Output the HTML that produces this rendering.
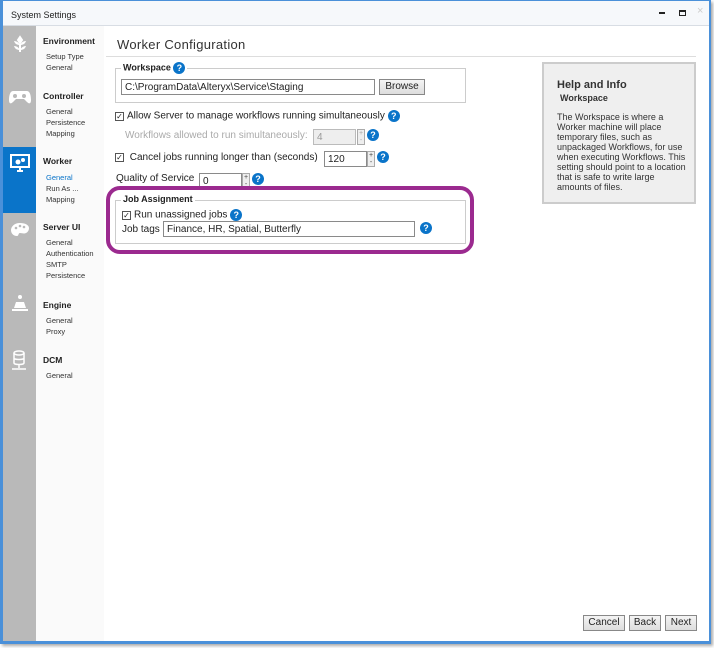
<!DOCTYPE html>
<html><head><style>
*{margin:0;padding:0;box-sizing:border-box}
body{width:714px;height:648px;background:#fff;font-family:"Liberation Sans",Arial,sans-serif;position:relative;overflow:hidden;font-size:12px;color:#222}
.win{position:absolute;left:0;top:0;width:711px;height:644px;background:#fff;box-shadow:2px 2px 3px #aaa}
.frame{position:absolute;left:0;top:0;width:711px;height:644px;border:3px solid #4a90d9;border-top:1px solid #4a90d9;border-right-width:2px;z-index:5}
.title{position:absolute;left:0;top:0;width:100%;height:26px;background:#f6f8fb;border-bottom:1px solid #d8dde4;font-size:9px;padding:10px 0 0 11px;color:#222}
.ab{position:absolute}
.icons{position:absolute;left:3px;top:26px;width:33px;height:618px;background:#b9b9b9}
.sel{position:absolute;left:3px;top:147px;width:33px;height:66px;background:#0a74c9}
.nav{position:absolute;left:36px;top:26px;width:68px;height:618px;background:#fafafa}
.nh{position:absolute;left:43px;font-weight:bold;font-size:8.5px;color:#222}
.ni{position:absolute;left:46px;font-size:7.5px;color:#333;line-height:11px}
h1{position:absolute;left:117px;top:37px;font-weight:normal;font-size:13px;color:#333;letter-spacing:.3px}
.hr{position:absolute;left:106px;top:56px;width:590px;height:1px;background:#ddd}
.q{display:inline-block;width:12px;height:12px;border-radius:50%;background:#0a74c9;color:#fff;font-size:9px;font-weight:bold;text-align:center;line-height:12px;vertical-align:middle}
.inp{position:absolute;border:1px solid #8a8a8a;background:#fff;font-size:10px;padding:1px 3px;height:16px;line-height:13px}
.cb{display:inline-block;width:9px;height:9px;border:1px solid #555;font-size:8px;line-height:8px;text-align:center;vertical-align:middle;margin-right:3px}
.t{position:absolute;font-size:10px;white-space:nowrap}
.spin{position:absolute;width:8px;height:16px;border:1px solid #aaa;background:#eee;font-size:7px;line-height:7px;text-align:center;color:#444}
.btn{position:absolute;border:1px solid #888;background:linear-gradient(#f4f4f4,#ddd);font-size:10px;text-align:center;height:16px;line-height:14px}
.fs{position:absolute;border:1px solid #ccc}
</style></head><body>
<div class="win">
<div class="title">System Settings
<span class="ab" style="left:659px;top:12px;width:6px;height:2px;background:#222"></span>
<span class="ab" style="left:679px;top:10px;width:7px;height:6px;border:1px solid #222;border-top-width:2px"></span>
<span class="ab" style="left:697px;top:5px;font-size:11px;color:#ccc">×</span>
</div>
<div class="icons"></div>
<div class="sel"></div>
<svg class="ab" style="left:10px;top:34px" width="20" height="20" viewBox="0 0 20 20" fill="#fff"><path d="M10 3l2 3-2 3-2-3zM10 10v8" stroke="#fff" stroke-width="2"/><path d="M4 7c3 0 5 2 6 4-3 0-5-1-6-4zM16 7c-3 0-5 2-6 4 3 0 5-1 6-4zM4 12c3 0 5 2 6 4-3 0-5-1-6-4zM16 12c-3 0-5 2-6 4 3 0 5-1 6-4z"/></svg>
<svg class="ab" style="left:9px;top:90px" width="22" height="14" viewBox="0 0 22 14"><path d="M4 1h14c3 0 4 5 4 9s-2 4-4 2l-3-3H7l-3 3c-2 2-4 2-4-2S1 1 4 1z" fill="#fff"/><circle cx="6" cy="6" r="2" fill="#b9b9b9"/><circle cx="15" cy="6" r="2" fill="#b9b9b9"/></svg>
<svg class="ab" style="left:10px;top:154px" width="20" height="18" viewBox="0 0 20 18"><rect x="1" y="1" width="18" height="12" fill="none" stroke="#fff" stroke-width="2"/><path d="M7 17h6M10 13v4" stroke="#fff" stroke-width="2"/><circle cx="8" cy="8" r="2.5" fill="#fff"/><circle cx="13" cy="6" r="2" fill="#fff"/></svg>
<svg class="ab" style="left:10px;top:222px" width="20" height="16" viewBox="0 0 20 16"><path d="M10 1C4 1 1 5 1 8s2 6 6 6c2 0 1-3 3-3s4 1 6 0 3-3 3-5C19 3 15 1 10 1z" fill="#fff"/><circle cx="6" cy="6" r="1.3" fill="#b9b9b9"/><circle cx="10" cy="4" r="1.3" fill="#b9b9b9"/><circle cx="14" cy="5" r="1.3" fill="#b9b9b9"/></svg>
<svg class="ab" style="left:11px;top:294px" width="18" height="20" viewBox="0 0 18 20" fill="#fff"><circle cx="9" cy="3" r="2"/><path d="M5 8h8l2 6H3z"/><rect x="1" y="15" width="16" height="2"/></svg>
<svg class="ab" style="left:11px;top:350px" width="16" height="22" viewBox="0 0 16 22"><ellipse cx="8" cy="3" rx="5" ry="2" fill="none" stroke="#fff" stroke-width="1.5"/><path d="M3 3v10c0 2 10 2 10 0V3M3 8c0 2 10 2 10 0M8 15v3M1 19h14" fill="none" stroke="#fff" stroke-width="1.5"/></svg>
<div class="nav"></div>
<div class="nh" style="top:36px">Environment</div>
<div class="ni" style="top:51px">Setup Type<br>General</div>
<div class="nh" style="top:91px">Controller</div>
<div class="ni" style="top:106px">General<br>Persistence<br>Mapping</div>
<div class="nh" style="top:156px">Worker</div>
<div class="ni" style="top:172px"><span style="color:#0a74c9">General</span><br>Run As ...<br>Mapping</div>
<div class="nh" style="top:222px">Server UI</div>
<div class="ni" style="top:237px">General<br>Authentication<br>SMTP<br>Persistence</div>
<div class="nh" style="top:300px">Engine</div>
<div class="ni" style="top:315px">General<br>Proxy</div>
<div class="nh" style="top:355px">DCM</div>
<div class="ni" style="top:370px">General</div>

<h1>Worker Configuration</h1>
<div class="hr"></div>

<div class="fs" style="left:115px;top:68px;width:351px;height:35px"></div>
<div class="t" style="left:121px;top:62px;background:#fff;padding:0 2px;font-weight:bold;font-size:9px">Workspace <span class="q">?</span></div>
<div class="inp" style="left:121px;top:79px;width:254px">C:\ProgramData\Alteryx\Service\Staging</div>
<div class="btn" style="left:379px;top:79px;width:46px">Browse</div>

<div class="t" style="left:115px;top:110px"><span class="cb">✓</span>Allow Server to manage workflows running simultaneously <span class="q">?</span></div>
<div class="t" style="left:125px;top:130px;color:#aaa">Workflows allowed to run simultaneously:</div>
<div class="inp" style="left:313px;top:129px;width:43px;background:#eee;border-color:#bbb;color:#999">4</div>
<div class="spin" style="left:357px;top:129px;color:#aaa">+<br>-</div>
<span class="q ab" style="left:367px;top:129px">?</span>

<div class="t" style="left:115px;top:152px"><span class="cb">✓</span> Cancel jobs running longer than (seconds)</div>
<div class="inp" style="left:324px;top:151px;width:43px">120</div>
<div class="spin" style="left:367px;top:151px">+<br>-</div>
<span class="q ab" style="left:377px;top:151px">?</span>

<div class="t" style="left:116px;top:173px">Quality of Service</div>
<div class="inp" style="left:199px;top:173px;width:43px">0</div>
<div class="spin" style="left:242px;top:173px">+<br>-</div>
<span class="q ab" style="left:252px;top:173px">?</span>

<div class="ab" style="left:106px;top:186px;width:368px;height:68px;border:4px solid #9b2a8f;border-radius:14px"></div>
<div class="fs" style="left:115px;top:200px;width:351px;height:44px"></div>
<div class="t" style="left:121px;top:194px;background:#fff;padding:0 2px;font-weight:bold;font-size:9px">Job Assignment</div>
<div class="t" style="left:122px;top:209px"><span class="cb">✓</span>Run unassigned jobs <span class="q">?</span></div>
<div class="t" style="left:122px;top:224px">Job tags</div>
<div class="inp" style="left:163px;top:221px;width:252px">Finance, HR, Spatial, Butterfly</div>
<span class="q ab" style="left:420px;top:222px">?</span>

<div class="ab" style="left:542px;top:62px;width:154px;height:142px;background:#efefef;border:2px solid #ccc;padding:16px 4px 0 13px;font-size:9px;color:#333;line-height:10px;white-space:nowrap">
<div style="font-weight:bold;font-size:11px;margin-bottom:3px">Help and Info</div>
<div style="font-weight:bold;margin-left:3px;margin-bottom:9px">Workspace</div>
The Workspace is where a<br>Worker machine will place<br>temporary files, such as<br>unpackaged Workflows, for use<br>when executing Workflows. This<br>setting should point to a location<br>that is safe to write large<br>amounts of files.</div>

<div class="btn" style="left:583px;top:615px;width:42px">Cancel</div>
<div class="btn" style="left:629px;top:615px;width:32px">Back</div>
<div class="btn" style="left:665px;top:615px;width:32px">Next</div>
</div>
<div class="frame"></div>
</body></html>
